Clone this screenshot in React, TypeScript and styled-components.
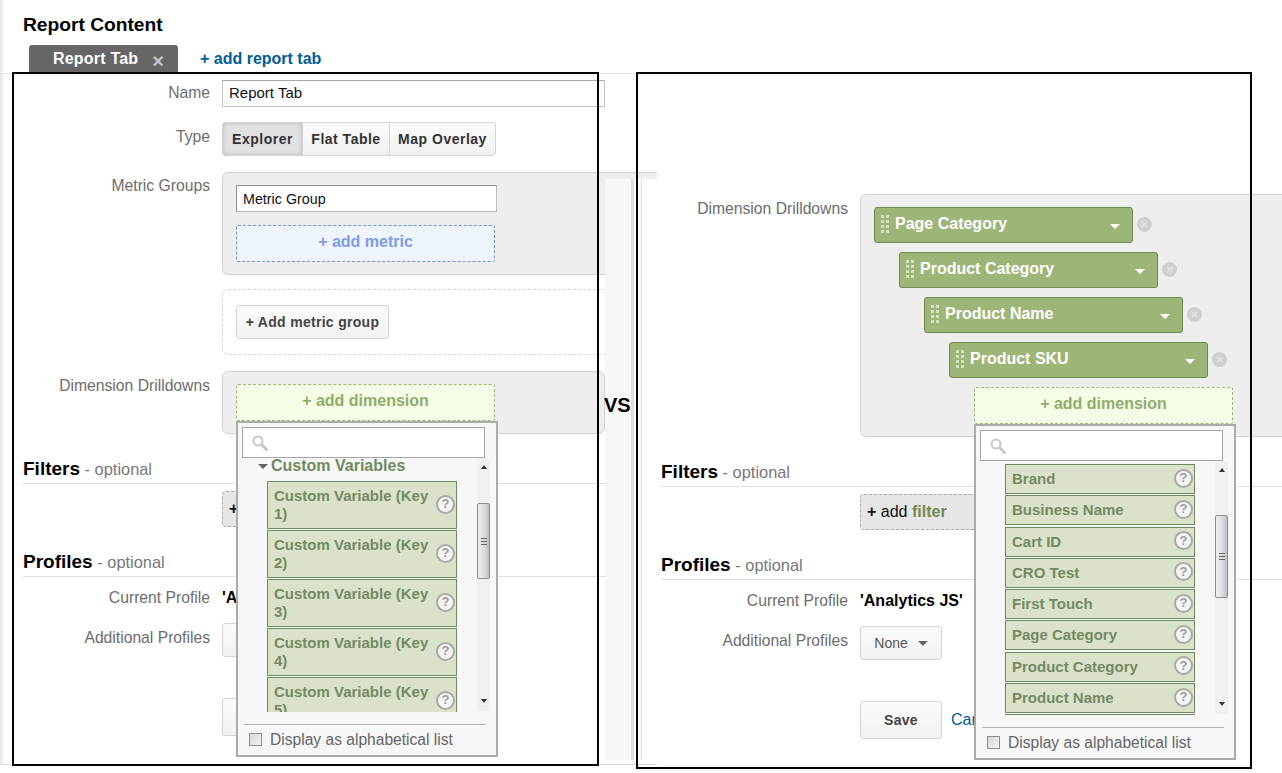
import React from "react";
import styled, { createGlobalStyle } from "styled-components";

const GlobalStyle = createGlobalStyle`
  html, body {
    margin: 0;
    padding: 0;
    background: #fff;
    font-family: "Liberation Sans", Arial, sans-serif;
  }
  * {
    box-sizing: border-box;
  }
`;

const Canvas = styled.div`
  position: relative;
  display: flex;
  width: 1282px;
  height: 773px;
  overflow: hidden;
  background: #fff;
`;

const LeftColumn = styled.div`
  width: 657px;
  height: 765px;
  flex: none;
  padding-top: 15px;
  border-left: 3px solid #ebebeb;
  border-bottom: 1px solid #d8d8d8;
`;

const RightColumn = styled.div`
  flex: 1;
  min-width: 0;
  padding-top: 194px;
`;

const PageTitle = styled.h1`
  margin: 0 0 10px 20px;
  font-size: 19.2px;
  line-height: 20px;
  font-weight: bold;
  color: #000;
`;

const TabBar = styled.div`
  display: flex;
  align-items: flex-start;
  gap: 22px;
  height: 29px;
  padding-left: 26px;
  border-bottom: 1px solid #e2e2e2;
`;

const Tab = styled.div`
  display: flex;
  align-items: center;
  width: 149px;
  height: 27px;
  padding-left: 24px;
  background: #666;
  border-radius: 3px 3px 0 0;
  color: #fff;
  font-size: 16px;
  font-weight: bold;
  letter-spacing: 0.2px;
`;

const TabClose = styled.span`
  margin: 4px 0 0 14px;
  color: #c4c4c4;
  font-size: 20px;
  line-height: 20px;
`;

const TabLink = styled.a`
  height: 27px;
  line-height: 27px;
  color: #005c9c;
  font-size: 16px;
  font-weight: bold;
`;

const Fields = styled.div<{ $pad: number }>`
  padding-left: ${(p) => p.$pad}px;
`;

const FieldRow = styled.div<{ $top: number }>`
  display: grid;
  grid-template-columns: 187px auto;
  column-gap: 12px;
  justify-content: start;
  margin-top: ${(p) => p.$top}px;
`;

const FieldLabel = styled.div<{ $pad: number }>`
  padding-top: ${(p) => p.$pad}px;
  text-align: right;
  color: #6d6d6d;
  font-size: 15.7px;
  line-height: 18px;
`;

const TextInput = styled.div<{ $width: number }>`
  width: ${(p) => p.$width}px;
  height: 27px;
  padding-left: 6px;
  background: #fff;
  border: 1px solid #c4c4c4;
  border-top-color: #a8a8a8;
  color: #111;
  font-size: 15px;
  line-height: 24px;
`;

const Segmented = styled.div`
  display: flex;
  height: 34px;
  border: 1px solid #d4d4d4;
  border-radius: 3px;
  overflow: hidden;
`;

const Segment = styled.div<{ $width: number; $active?: boolean }>`
  width: ${(p) => p.$width}px;
  display: flex;
  align-items: center;
  justify-content: center;
  color: #333;
  font-size: 14px;
  font-weight: bold;
  letter-spacing: 0.5px;
  background: ${(p) =>
    p.$active ? "#e2e2e2" : "linear-gradient(#fbfbfb, #f0f0f0)"};
  box-shadow: ${(p) => (p.$active ? "inset 0 0 4px #b4b4b4" : "none")};
  & + & {
    border-left: 1px solid #d4d4d4;
  }
`;

const GroupPanel = styled.div<{ $width: number }>`
  width: ${(p) => p.$width}px;
  padding: 12px 13px;
  background: #eee;
  border: 1px solid #d2d2d2;
  border-radius: 6px;
`;

// runs on under the pale strip at the column edge, so no right corners
const MetricPanel = styled(GroupPanel)`
  border-right: none;
  border-radius: 6px 0 0 6px;
`;

const DrillPanel = styled(GroupPanel)`
  height: 243px;
`;

const MetricInput = styled(TextInput)`
  margin-bottom: 13px;
  border-color: #bdbdbd;
  border-top-color: #8f8f8f;
  border-left-color: #8f8f8f;
  font-size: 14.3px;
  line-height: 26px;
`;

const AddBox = styled.div<{ $tone: "blue" | "green" }>`
  width: 259px;
  height: 37px;
  border: 1px dashed ${(p) => (p.$tone === "blue" ? "#6f8fe0" : "#9db678")};
  border-radius: 2px;
  background: ${(p) => (p.$tone === "blue" ? "#eff5fe" : "#f4fde6")};
  color: ${(p) => (p.$tone === "blue" ? "#7f9be8" : "#93ab6c")};
  font-size: 16px;
  font-weight: bold;
  line-height: 32px;
  text-align: center;
`;

const DashedArea = styled.div`
  width: 435px;
  height: 66px;
  padding-top: 15px;
  padding-left: 13px;
  border: 1px dashed #d4d4d4;
  border-radius: 6px;
`;

const PlainButton = styled.div<{ $width: number; $height: number }>`
  display: flex;
  align-items: center;
  justify-content: center;
  width: ${(p) => p.$width}px;
  height: ${(p) => p.$height}px;
  background: linear-gradient(#fbfbfb, #f1f1f1);
  border: 1px solid #d4d4d4;
  border-radius: 3px;
  color: #444;
  font-size: 14px;
  font-weight: bold;
  letter-spacing: 0.3px;
`;

const SelectButton = styled(PlainButton)`
  gap: 10px;
  font-weight: normal;
  letter-spacing: 0;
  color: #555;
`;

const SelectCaret = styled.span`
  width: 0;
  height: 0;
  border-left: 5px solid transparent;
  border-right: 5px solid transparent;
  border-top: 5px solid #666;
`;

const DropAnchor = styled.div<{ $indent?: number }>`
  position: relative;
  width: 259px;
  margin-left: ${(p) => p.$indent ?? 0}px;
  z-index: 3;
`;

const Popup = styled.div`
  position: absolute;
  top: 100%;
  left: 0;
  display: flex;
  flex-direction: column;
  width: 262px;
  height: 336px;
  padding: 4px 0 0 4px;
  background: #f7f7f7;
  border: 2px solid #ababab;
`;

const SearchBox = styled.div`
  display: flex;
  align-items: center;
  flex: none;
  width: 243px;
  height: 31px;
  padding-left: 9px;
  background: #fff;
  border: 1px solid #a6a6a6;
`;

const ListArea = styled.div`
  display: flex;
  flex: none;
  height: 254px;
  margin-left: -4px;
`;

const ListClip = styled.div<{ $top: number }>`
  width: 238px;
  padding-top: ${(p) => p.$top}px;
  overflow: hidden;
`;

const GroupHead = styled.div`
  display: flex;
  align-items: center;
  gap: 3px;
  height: 15px;
  margin: 0 0 8px 20px;
  color: #6f8a60;
  font-size: 16px;
  font-weight: bold;
`;

const GroupCaret = styled.span`
  width: 0;
  height: 0;
  margin-top: 2px;
  border-left: 5px solid transparent;
  border-right: 5px solid transparent;
  border-top: 5px solid #666;
`;

const ListItem = styled.div<{ $height: number; $gap: number }>`
  display: flex;
  align-items: center;
  justify-content: space-between;
  flex: none;
  width: 190px;
  height: ${(p) => p.$height}px;
  margin: 0 0 ${(p) => p.$gap}px 29px;
  padding: 0 1px 0 6px;
  background: #dae2ca;
  border: 1px solid #6f8a60;
  color: #748a63;
  font-size: 15px;
  font-weight: bold;
  line-height: 18px;
`;

const ItemName = styled.span`
  flex: 1;
`;

const HelpIcon = styled.span`
  display: flex;
  align-items: center;
  justify-content: center;
  flex: none;
  width: 19px;
  height: 19px;
  margin: 0 0 2px 2px;
  border: 2.5px solid #a9a9a9;
  border-radius: 50%;
  background: #f4f4f4;
  color: #9c9c9c;
  font-size: 13px;
  font-weight: bold;
`;

const Scrollbar = styled.div`
  position: relative;
  width: 15px;
  height: 100%;
  background: #f0f0f0;
  border: 1px solid #f6f6f6;
`;

const ScrollArrow = styled.span<{ $down?: boolean }>`
  position: absolute;
  left: 4px;
  ${(p) => (p.$down ? "bottom: 8px" : "top: 6px")};
  width: 0;
  height: 0;
  border-left: 3.5px solid transparent;
  border-right: 3.5px solid transparent;
  ${(p) => (p.$down ? "border-top" : "border-bottom")}: 4px solid #333;
`;

const ScrollThumb = styled.div<{ $top: number; $height: number }>`
  display: flex;
  align-items: center;
  justify-content: center;
  width: 13px;
  height: ${(p) => p.$height}px;
  margin-top: ${(p) => p.$top}px;
  background: linear-gradient(90deg, #f0f0f0, #dcdce0 55%, #bdbdc4);
  border: 1px solid #8c8c8c;
  border-radius: 2px;
`;

const ThumbGrip = styled.span`
  width: 6px;
  height: 7px;
  border-top: 1px solid #666;
  border-bottom: 1px solid #666;
  background: linear-gradient(#666, #666) center / 100% 1px no-repeat;
`;

const PopupFooter = styled.div`
  display: flex;
  align-items: center;
  gap: 8px;
  width: 242px;
  height: 30px;
  margin: 12px 0 0 2px;
  padding-left: 5px;
  border-top: 1px solid #b4b4b4;
  color: #666;
  font-size: 15.6px;
`;

const CheckBox = styled.span`
  width: 13px;
  height: 13px;
  flex: none;
  border: 1px solid #8e8e8e;
  background: linear-gradient(135deg, #d8d8d8, #f4f4f4);
`;

const SectionHead = styled.div`
  width: 100%;
  height: 25px;
  margin-top: 25px;
  border-bottom: 1px solid #e0e0e0;
  color: #777;
  font-size: 16.4px;
  line-height: 20px;
`;

const SectionName = styled.strong`
  color: #000;
  font-size: 19px;
`;

const FilterButton = styled.div`
  width: 180px;
  height: 36px;
  padding-left: 6px;
  background: #e6e6e6;
  border: 1px dashed #a8a8a8;
  border-radius: 4px;
  color: #111;
  font-size: 16px;
  line-height: 33px;
`;

const FilterWord = styled.span`
  color: #748a50;
  font-weight: bold;
`;

const ProfileName = styled.div`
  color: #000;
  font-size: 16px;
  font-weight: bold;
  line-height: 20px;
`;

const SaveRow = styled.div`
  display: flex;
  align-items: center;
  gap: 9px;
`;

const CancelLink = styled.a`
  color: #005c9c;
  font-size: 16px;
`;

const LeftLower = styled.div`
  margin-top: 16px;
`;

const DrillRow = styled.div<{ $depth: number }>`
  display: flex;
  align-items: center;
  gap: 4px;
  margin: 0 0 9px ${(p) => p.$depth * 25}px;
`;

const Chip = styled.div`
  display: flex;
  align-items: center;
  width: 259px;
  height: 36px;
  padding: 0 12px 2px 6px;
  background: #9db678;
  border: 1px solid #6f8a50;
  border-radius: 3px;
  color: #fff;
  font-size: 16px;
  font-weight: bold;
`;

const ChipName = styled.span`
  flex: 1;
  margin-left: 5px;
`;

const ChipCaret = styled.span`
  width: 0;
  height: 0;
  margin-top: 5px;
  border-left: 5px solid transparent;
  border-right: 5px solid transparent;
  border-top: 5px solid #fff;
`;

const RemoveWrap = styled.span`
  display: flex;
  margin-top: -2px;
`;

const FlankStrip = styled.div`
  position: absolute;
  left: 605px;
  top: 179px;
  width: 52px;
  height: 581px;
  background: linear-gradient(
    90deg,
    #f7f7f7 0 26px,
    #dedede 26px 29px,
    #fff 29px 36px,
    #dedede 36px 37px,
    #fff 37px
  );
`;

const VersusMark = styled.div`
  position: absolute;
  left: 604px;
  top: 394px;
  color: #000;
  font-size: 20px;
  font-weight: bold;
  line-height: 22px;
`;

const MarkerFrame = styled.div<{ $l: number; $t: number; $w: number; $h: number }>`
  position: absolute;
  left: ${(p) => p.$l}px;
  top: ${(p) => p.$t}px;
  width: ${(p) => p.$w}px;
  height: ${(p) => p.$h}px;
  border: 2px solid #000;
  pointer-events: none;
  z-index: 5;
`;

const SearchGlass = () => (
  <svg width="16" height="16" viewBox="0 0 16 16" fill="none">
    <circle cx="6" cy="6" r="4.5" stroke="#c8c8c8" strokeWidth="2" />
    <path d="M9.5 9.5 14.5 14.5" stroke="#c8c8c8" strokeWidth="3" strokeLinecap="round" />
  </svg>
);

const GripDots = () => (
  <svg width="9" height="18" viewBox="0 0 9 18" fill="#d5e0c0">
    {[0, 5, 10, 15].map((y) => (
      <React.Fragment key={y}>
        <rect x="0" y={y} width="3" height="3" />
        <rect x="5" y={y} width="3" height="3" />
      </React.Fragment>
    ))}
  </svg>
);

const RemoveDot = () => (
  <svg width="15" height="15" viewBox="0 0 15 15">
    <circle cx="7.5" cy="7.5" r="7.5" fill="#cfcfcf" />
    <path d="M5 5 10 10M10 5 5 10" stroke="#e0e0e0" strokeWidth="2" />
  </svg>
);

interface PopupProps {
  children: React.ReactNode;
  listTop: number;
  thumbTop: number;
  thumbHeight: number;
}

const DimensionPopup = ({ children, listTop, thumbTop, thumbHeight }: PopupProps) => (
  <Popup>
    <SearchBox>
      <SearchGlass />
    </SearchBox>
    <ListArea>
      <ListClip $top={listTop}>{children}</ListClip>
      <Scrollbar>
        <ScrollArrow />
        <ScrollThumb $top={thumbTop} $height={thumbHeight}>
          <ThumbGrip />
        </ScrollThumb>
        <ScrollArrow $down />
      </Scrollbar>
    </ListArea>
    <PopupFooter>
      <CheckBox />
      Display as alphabetical list
    </PopupFooter>
  </Popup>
);

const LowerForm = ({ children, pad }: { children: React.ReactNode; pad: number }) => (
  <Fields $pad={pad}>
    <FieldRow $top={0}>
      <FieldLabel $pad={6}>Dimension Drilldowns</FieldLabel>
      {children}
    </FieldRow>
    <SectionHead>
      <SectionName>Filters</SectionName> - optional
    </SectionHead>
    <FieldRow $top={7}>
      <span />
      <FilterButton>
        <b>+</b> add <FilterWord>filter</FilterWord>
      </FilterButton>
    </FieldRow>
    <SectionHead>
      <SectionName>Profiles</SectionName> - optional
    </SectionHead>
    <FieldRow $top={11}>
      <FieldLabel $pad={1}>Current Profile</FieldLabel>
      <ProfileName>'Analytics JS'</ProfileName>
    </FieldRow>
    <FieldRow $top={15}>
      <FieldLabel $pad={6}>Additional Profiles</FieldLabel>
      <SelectButton $width={82} $height={34}>
        None <SelectCaret />
      </SelectButton>
    </FieldRow>
    <FieldRow $top={41}>
      <span />
      <SaveRow>
        <PlainButton $width={82} $height={38}>
          Save
        </PlainButton>
        <CancelLink>Cancel</CancelLink>
      </SaveRow>
    </FieldRow>
  </Fields>
);

const customKeys = [1, 2, 3, 4, 5];
const dimensionNames = [
  "Brand",
  "Business Name",
  "Cart ID",
  "CRO Test",
  "First Touch",
  "Page Category",
  "Product Category",
  "Product Name",
  "Product SKU",
];
const drilldowns = ["Page Category", "Product Category", "Product Name", "Product SKU"];

export default function App() {
  return (
    <Canvas>
      <GlobalStyle />
      <LeftColumn>
        <PageTitle>Report Content</PageTitle>
        <TabBar>
          <Tab>
            Report Tab
            <TabClose>×</TabClose>
          </Tab>
          <TabLink>+ add report tab</TabLink>
        </TabBar>
        <Fields $pad={20}>
          <FieldRow $top={6}>
            <FieldLabel $pad={4}>Name</FieldLabel>
            <TextInput $width={383}>Report Tab</TextInput>
          </FieldRow>
          <FieldRow $top={15}>
            <FieldLabel $pad={6}>Type</FieldLabel>
            <Segmented>
              <Segment $width={79} $active>
                Explorer
              </Segment>
              <Segment $width={87}>Flat Table</Segment>
              <Segment $width={106}>Map Overlay</Segment>
            </Segmented>
          </FieldRow>
          <FieldRow $top={16}>
            <FieldLabel $pad={5}>Metric Groups</FieldLabel>
            <MetricPanel $width={435}>
              <MetricInput $width={261}>Metric Group</MetricInput>
              <AddBox $tone="blue">+ add metric</AddBox>
            </MetricPanel>
          </FieldRow>
          <FieldRow $top={14}>
            <span />
            <DashedArea>
              <PlainButton $width={153} $height={34}>
                + Add metric group
              </PlainButton>
            </DashedArea>
          </FieldRow>
        </Fields>
        <LeftLower>
          <LowerForm pad={20}>
            <GroupPanel $width={383}>
              <DropAnchor>
                <AddBox $tone="green">+ add dimension</AddBox>
                <DimensionPopup listTop={0} thumbTop={44} thumbHeight={76}>
                  <GroupHead>
                    <GroupCaret />
                    Custom Variables
                  </GroupHead>
                  {customKeys.map((k) => (
                    <ListItem key={k} $height={48} $gap={1}>
                      <ItemName>Custom Variable (Key {k})</ItemName>
                      <HelpIcon>?</HelpIcon>
                    </ListItem>
                  ))}
                </DimensionPopup>
              </DropAnchor>
            </GroupPanel>
          </LowerForm>
        </LeftLower>
      </LeftColumn>
      <RightColumn>
        <LowerForm pad={4}>
          <DrillPanel $width={500}>
            {drilldowns.map((name, i) => (
              <DrillRow key={name} $depth={i}>
                <Chip>
                  <GripDots />
                  <ChipName>{name}</ChipName>
                  <ChipCaret />
                </Chip>
                <RemoveWrap>
                  <RemoveDot />
                </RemoveWrap>
              </DrillRow>
            ))}
            <DropAnchor $indent={100}>
              <AddBox $tone="green">+ add dimension</AddBox>
              <DimensionPopup listTop={3} thumbTop={53} thumbHeight={83}>
                {dimensionNames.map((name) => (
                  <ListItem key={name} $height={30} $gap={1.3}>
                    <ItemName>{name}</ItemName>
                    <HelpIcon>?</HelpIcon>
                  </ListItem>
                ))}
              </DimensionPopup>
            </DropAnchor>
          </DrillPanel>
        </LowerForm>
      </RightColumn>
      <FlankStrip />
      <VersusMark>VS</VersusMark>
      <MarkerFrame $l={12} $t={72} $w={587} $h={694} />
      <MarkerFrame $l={636} $t={72} $w={616} $h={697} />
    </Canvas>
  );
}
